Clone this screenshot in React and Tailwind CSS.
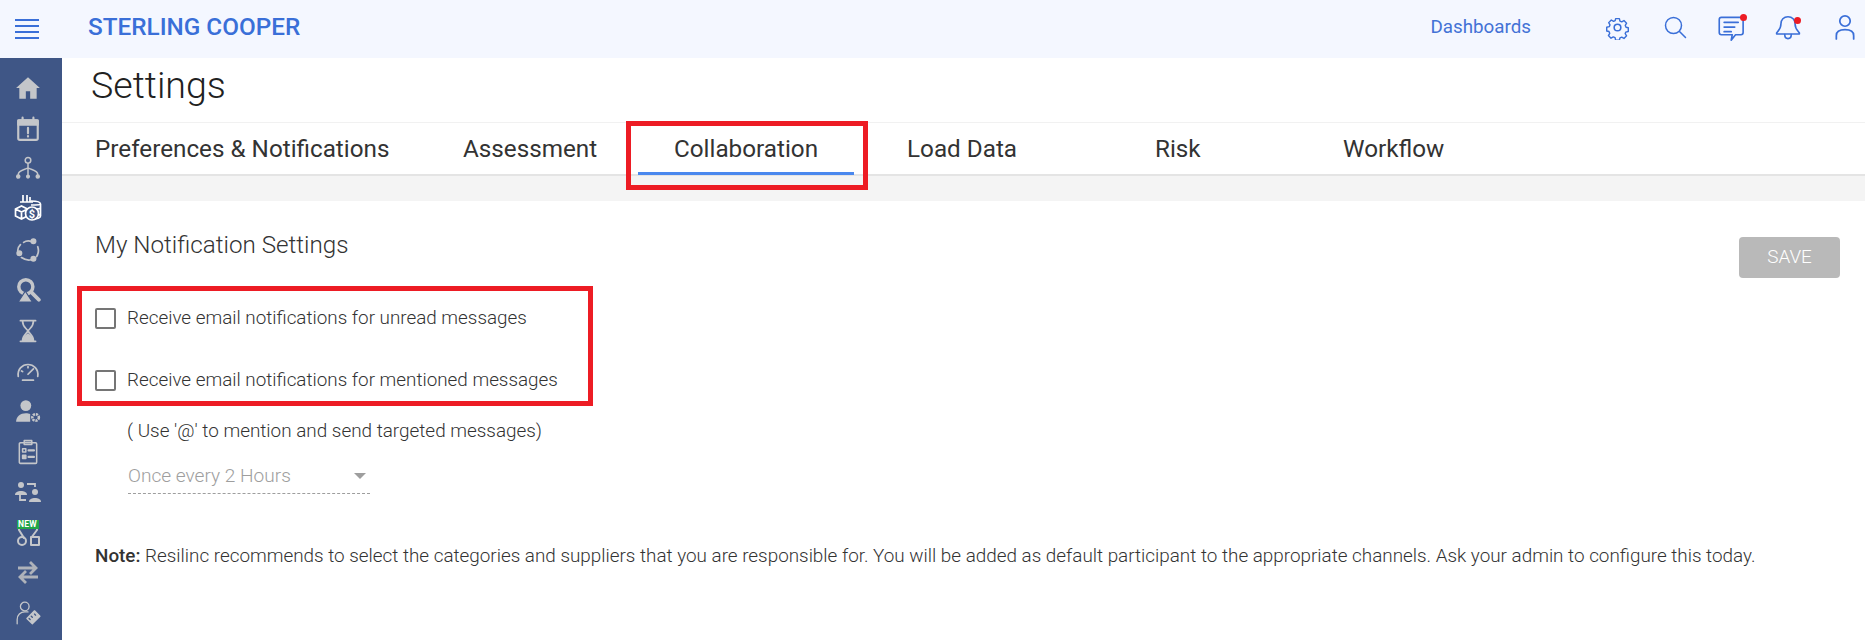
import React from 'react';

const Stroke = ({ children, size = 24, sw = 1.6, vb = '0 0 24 24', className = '' }) => (
  <svg width={size} height={size} viewBox={vb} fill="none" stroke="currentColor" strokeWidth={sw} strokeLinecap="round" strokeLinejoin="round" className={className}>{children}</svg>
);

const sideIcons = [
  <svg key="h" width="26" height="24" viewBox="0 0 24 22" fill="currentColor"><path d="M12 1 L1 11 H4 V21 H10 V14 H14 V21 H20 V11 H23 Z" /></svg>,
  <Stroke key="c" size={26} sw={2}><rect x="3" y="4" width="18" height="18" rx="1.5" /><path d="M3 4h18v4H3z" fill="currentColor" /><path d="M7 1.5v3M17 1.5v3" /><path d="M12 11v5M12 18.5v.5" /></Stroke>,
  <Stroke key="o" size={26} sw={1.4}><circle cx="12" cy="4" r="2.6" /><path d="M12 7v4M3 17c0-4 5-4 9-6 4 2 9 2 9 6M12 11v6" /><circle cx="3" cy="19" r="1.4" fill="currentColor" /><circle cx="12" cy="19" r="1.2" fill="currentColor" /><circle cx="21" cy="19" r="1.4" fill="currentColor" /></Stroke>,
  <svg key="m" width="28" height="28" viewBox="0 0 28 28" fill="none" stroke="#fff" strokeWidth="1.7"><path d="M9 0v7M13 0v7M16 2v5M6 7h13" /><path d="M1.500 14l6-3 6 3v7l-6 3-6-3zM1.500 14l6 3 6-3M7.500 17v7" /><path d="M17 6c5 0 9.500 1 9.500 3v12c0 2-4 3-7 3M17 10c5 0 9.500 0 9.500-1M22 14c2 0 4.500-.5 4.500-1.500M24 20c1.500 0 2.500-.5 2.500-1.500" /><circle cx="18" cy="18.500" r="6.500" fill="#3f5686" /><text x="18" y="22.500" fontSize="11" fontWeight="700" fontFamily="Roboto" textAnchor="middle" fill="#fff" stroke="none">$</text></svg>,
  <Stroke key="cy" size={26} sw={1.6}><path d="M8 5c2-1.500 5-1.500 7-1M21 9c1 3 1 6-1 9M15 21c-3 1-6 0-9-2M3 15c-1-3 0-6 2-8" /><circle cx="17" cy="4" r="2" fill="currentColor" /><circle cx="17" cy="20" r="2" fill="currentColor" /><circle cx="4" cy="15" r="2" fill="currentColor" /></Stroke>,
  <svg key="s" width="26" height="26" viewBox="0 0 24 24" fill="none"><circle cx="10" cy="9" r="6.500" stroke="currentColor" strokeWidth="3.200" /><path d="M15 14l7 7" stroke="currentColor" strokeWidth="3.500" strokeLinecap="round" /><path d="M9.500 13L3 23h13z" fill="currentColor" stroke="#3f5686" strokeWidth="1" /></svg>,
  <Stroke key="hg" size={26} sw={1.6}><path d="M5 2.500h14M5 21.500h14M7 3c0 5 3 6 5 9 2-3 5-4 5-9M7 21c0-5 3-6 5-9 2 3 5 4 5 9" /><path d="M7.500 21c0-3 3-5 4.500-6 1.500 1 4.500 3 4.500 6z" fill="currentColor" /></Stroke>,
  <Stroke key="g" size={26} sw={1.6}><path d="M3 17c-1-7 4-11 9-11s10 4 9 11" /><path d="M12 15l5-5M7 20.500h10" /><path d="M6 12l1 .5M12 8v1" /></Stroke>,
  <svg key="u" width="26" height="24" viewBox="0 0 24 22" fill="currentColor"><circle cx="10" cy="6" r="5" /><path d="M1 21c0-5 4-8 9-8 1.500 0 3 .3 4 .8V21z" /><circle cx="19" cy="17" r="3" fill="none" stroke="currentColor" strokeWidth="2.400" strokeDasharray="2 .8" /></svg>,
  <Stroke key="cb" size={26} sw={1.4}><rect x="4" y="3.500" width="16" height="19" rx="1" /><rect x="8.500" y="1.500" width="7" height="3.500" /><rect x="7" y="9" width="3" height="3" /><rect x="7" y="15" width="3" height="3" fill="currentColor" /><path d="M12.500 10.500h5M12.500 16.500h5" strokeWidth="2" /></Stroke>,
  <svg key="p" width="28" height="24" viewBox="0 0 28 24" fill="currentColor"><circle cx="7" cy="5" r="3" /><path d="M1 15c0-3 3-4 6-4s6 1 6 4z" /><circle cx="21" cy="12" r="3" /><path d="M15 22c0-3 3-4 6-4s6 1 6 4z" /><path d="M13 4h8v3M6 15v5h6" fill="none" stroke="currentColor" strokeWidth="1.800" /></svg>,
  <div key="n" className="relative w-[30px] h-[30px] flex items-end justify-center">
    <Stroke size={24} sw={2}><circle cx="6" cy="18" r="4" /><rect x="15" y="14" width="8" height="8" /><path d="M3 2v5l5 8M21 2v5l-6 8M3 2h18" /></Stroke>
    <span className="absolute top-[3px] left-[4px] w-[22px] h-[9px] bg-[#21a649] text-white text-[8.500px] leading-[9px] font-bold text-center tracking-[0.3px]">NEW</span>
  </div>,
  <svg key="a" width="24" height="24" viewBox="0 0 24 24" fill="none" stroke="#aeb2ba" strokeWidth="2.800"><path d="M2 7h18M14 1l6 6-6 6" /><path d="M22 16H4M10 10l-6 6 6 6" /></svg>,
  <Stroke key="l" size={26} sw={1.2}><circle cx="9" cy="6" r="4" /><path d="M2 22v-4c0-4 3-7 7-7h3" /><path d="M11 17l7-7 5 5-7 7z" fill="currentColor" /><path d="M15 15l1 1M18 13l1 1M13 17l1 1" stroke="#3f5686" /></Stroke>,
];

const tabs = [
  ['Preferences & Notifications', 'w-[401px] pl-[33px]'],
  ['Assessment', 'w-[175px] pl-0'],
  ['Collaboration', 'w-[269px] pl-[36px]'],
  ['Load Data', 'w-[248px] pl-0'],
  ['Risk', 'w-[188px] pl-0'],
  ['Workflow', 'w-[200px] pl-0'],
];

const Check = ({ label, className = '' }) => (
  <label className={`flex items-center ${className}`}>
    <span className="w-[21px] h-[21px] border-2 border-[#757575] rounded-[2px] bg-white" />
    <span className="ml-[11px] text-[#333333] text-[18.850px] leading-[22px] font-light">{label}</span>
  </label>
);

const Dot = ({ className }) => <span className={`absolute w-[7px] h-[7px] rounded-full bg-[#ed1c24] ${className}`} />;

export default function App() {
  return (
    <div className="w-[1865px] h-[640px] overflow-hidden bg-white flex flex-col relative font-['Roboto',sans-serif]">
      <header className="h-[58px] bg-[#f4f7ff] flex items-center text-[#3a6fd8] shrink-0">
        <div className="w-[62px] flex flex-col gap-[4px] pl-[15px]">
          <span className="block w-[24px] h-[2px] bg-[#3a6fd8]" />
          <span className="block w-[24px] h-[2px] bg-[#3a6fd8]" />
          <span className="block w-[24px] h-[2px] bg-[#3a6fd8]" />
          <span className="block w-[24px] h-[2px] bg-[#3a6fd8]" />
        </div>
        <div className="ml-[26px] pb-[3px] text-[24.300px] font-medium text-[#3a6fd8] whitespace-nowrap leading-none">STERLING COOPER</div>
        <div className="ml-auto text-[18.800px] pr-[66px] pb-[3px] text-[#4372d6]">Dashboards</div>
        <div className="flex items-center pb-[4px]">
          <div className="w-[40px] flex justify-center mr-[18px]">
            <Stroke size={25} sw={1.500}><circle cx="12" cy="12" r="3.200" /><path d="M10 2.500h4l.6 2.700 1.900.8 2.400-1.400 2.800 2.800-1.400 2.400.8 1.900 2.400.6v4l-2.700.6-.6 1.700 1.500 2.300-2.800 2.800-2.400-1.400-1.900.8-.6 2.400h-4l-.6-2.700-1.900-.8-2.400 1.400-2.800-2.800 1.400-2.400-.8-1.900-2.400-.6v-4l2.700-.6.8-1.900-1.400-2.400 2.800-2.800 2.400 1.400 1.700-.8z" transform="translate(1.200 1.200) scale(.9)" /></Stroke>
          </div>
          <div className="w-[40px] flex justify-center mr-[15px]">
            <Stroke size={24} sw={1.500}><circle cx="10.500" cy="10.500" r="8" /><path d="M16.500 16.500l6 6" /></Stroke>
          </div>
          <div className="w-[40px] flex justify-center relative mr-[18px]">
            <Stroke size={28} sw={1.500}><path d="M5 4h18a2 2 0 0 1 2 2v12a2 2 0 0 1-2 2h-5l-4 5 1-5H5a2 2 0 0 1-2-2V6a2 2 0 0 1 2-2z" transform="scale(.93)" /><path d="M7 9h12M7 13h9M7 17h6" transform="translate(0 -1)" /></Stroke>
            <Dot className="right-[3px] top-[1px]" />
          </div>
          <div className="w-[40px] flex justify-center relative mr-[17px]">
            <Stroke size={26} sw={1.500}><path d="M12 2.500c-4 0-6.500 3-6.500 6.500 0 5-3 7-4 8.500v1h21v-1c-1-1.500-4-3.500-4-8.500 0-3.500-2.500-6.500-6.500-6.500z" /><path d="M9 19c0 5 6 5 6 0" /></Stroke>
            <Dot className="right-[7px] top-[3px]" />
          </div>
          <div className="w-[40px] flex justify-center">
            <Stroke size={26} sw={1.600}><circle cx="12" cy="6.500" r="4.800" /><path d="M4 23v-3c0-3.500 3-5.500 8-5.500s8 2 8 5.500v3" /></Stroke>
          </div>
        </div>
      </header>

      <div className="flex flex-1 min-h-0">
        <aside className="w-[62px] shrink-0 bg-[#3f5686] text-[#c4c6ca] flex flex-col items-center pr-[7px] pt-[10px]">
          {sideIcons.map((icon, i) => (
            <div key={i} className="h-[40.400px] shrink-0 flex items-center justify-center">{icon}</div>
          ))}
        </aside>

        <main className="flex-1 min-w-0 flex flex-col">
          <div className="h-[65px] border-b border-[#f1f1f1] pl-[29px] flex items-center">
            <h1 className="text-[37.600px] font-light text-[#212121] leading-none pb-[9px]">Settings</h1>
          </div>
          <nav className="h-[53px] border-b-2 border-[#e4e4e4] flex items-center">
            {tabs.map(([t, c]) => (
              <div key={t} className={`${c} h-full flex items-center pt-[2px] text-[24.250px] text-[#333333] whitespace-nowrap relative`}>
                {t}
                {t === 'Collaboration' && <span className="absolute left-0 bottom-[-1px] w-[216px] h-[3px] bg-[#4a88ee]" />}
              </div>
            ))}
          </nav>
          <div className="h-[25px] bg-[#f4f4f4]" />
          <section className="flex-1 pl-[33px] pr-[25px] relative">
            <div className="flex justify-between items-start">
              <h2 className="text-[24.200px] font-light text-[#333333] leading-[28px] pt-[30px]">My Notification Settings</h2>
              <button className="mt-[36px] w-[101px] h-[41px] rounded-[4px] bg-[#b9b9b9] text-white text-[18.900px] font-light">SAVE</button>
            </div>
            <div className="mt-[29px]">
              <Check label="Receive email notifications for unread messages" />
              <Check label="Receive email notifications for mentioned messages" className="mt-[40px]" />
            </div>
            <p className="ml-[32px] mt-[29px] text-[18.900px] font-light leading-[22px] text-[#333333]">( Use '@' to mention and send targeted messages)</p>
            <div className="ml-[33px] mt-[17px] w-[242px] h-[35px] border-b border-dashed border-[#9e9e9e] flex items-center justify-between pr-[4px]">
              <span className="text-[19.100px] font-light text-[#9e9e9e]">Once every 2 Hours</span>
              <span className="w-0 h-0 border-x-[6px] border-x-transparent border-t-[6px] border-t-[#9e9e9e]" />
            </div>
            <p className="mt-[51px] text-[18.870px] leading-[22px] font-light text-[#333333] whitespace-nowrap"><strong className="font-medium">Note:</strong> Resilinc recommends to select the categories and suppliers that you are responsible for. You will be added as default participant to the appropriate channels. Ask your admin to configure this today.</p>
          </section>
        </main>
      </div>

      <div className="absolute left-[626px] top-[121px] w-[242px] h-[69px] border-[5px] border-[#ed1c24] pointer-events-none" />
      <div className="absolute left-[77px] top-[286px] w-[516px] h-[120px] border-[5px] border-[#ed1c24] pointer-events-none" />
    </div>
  );
}
